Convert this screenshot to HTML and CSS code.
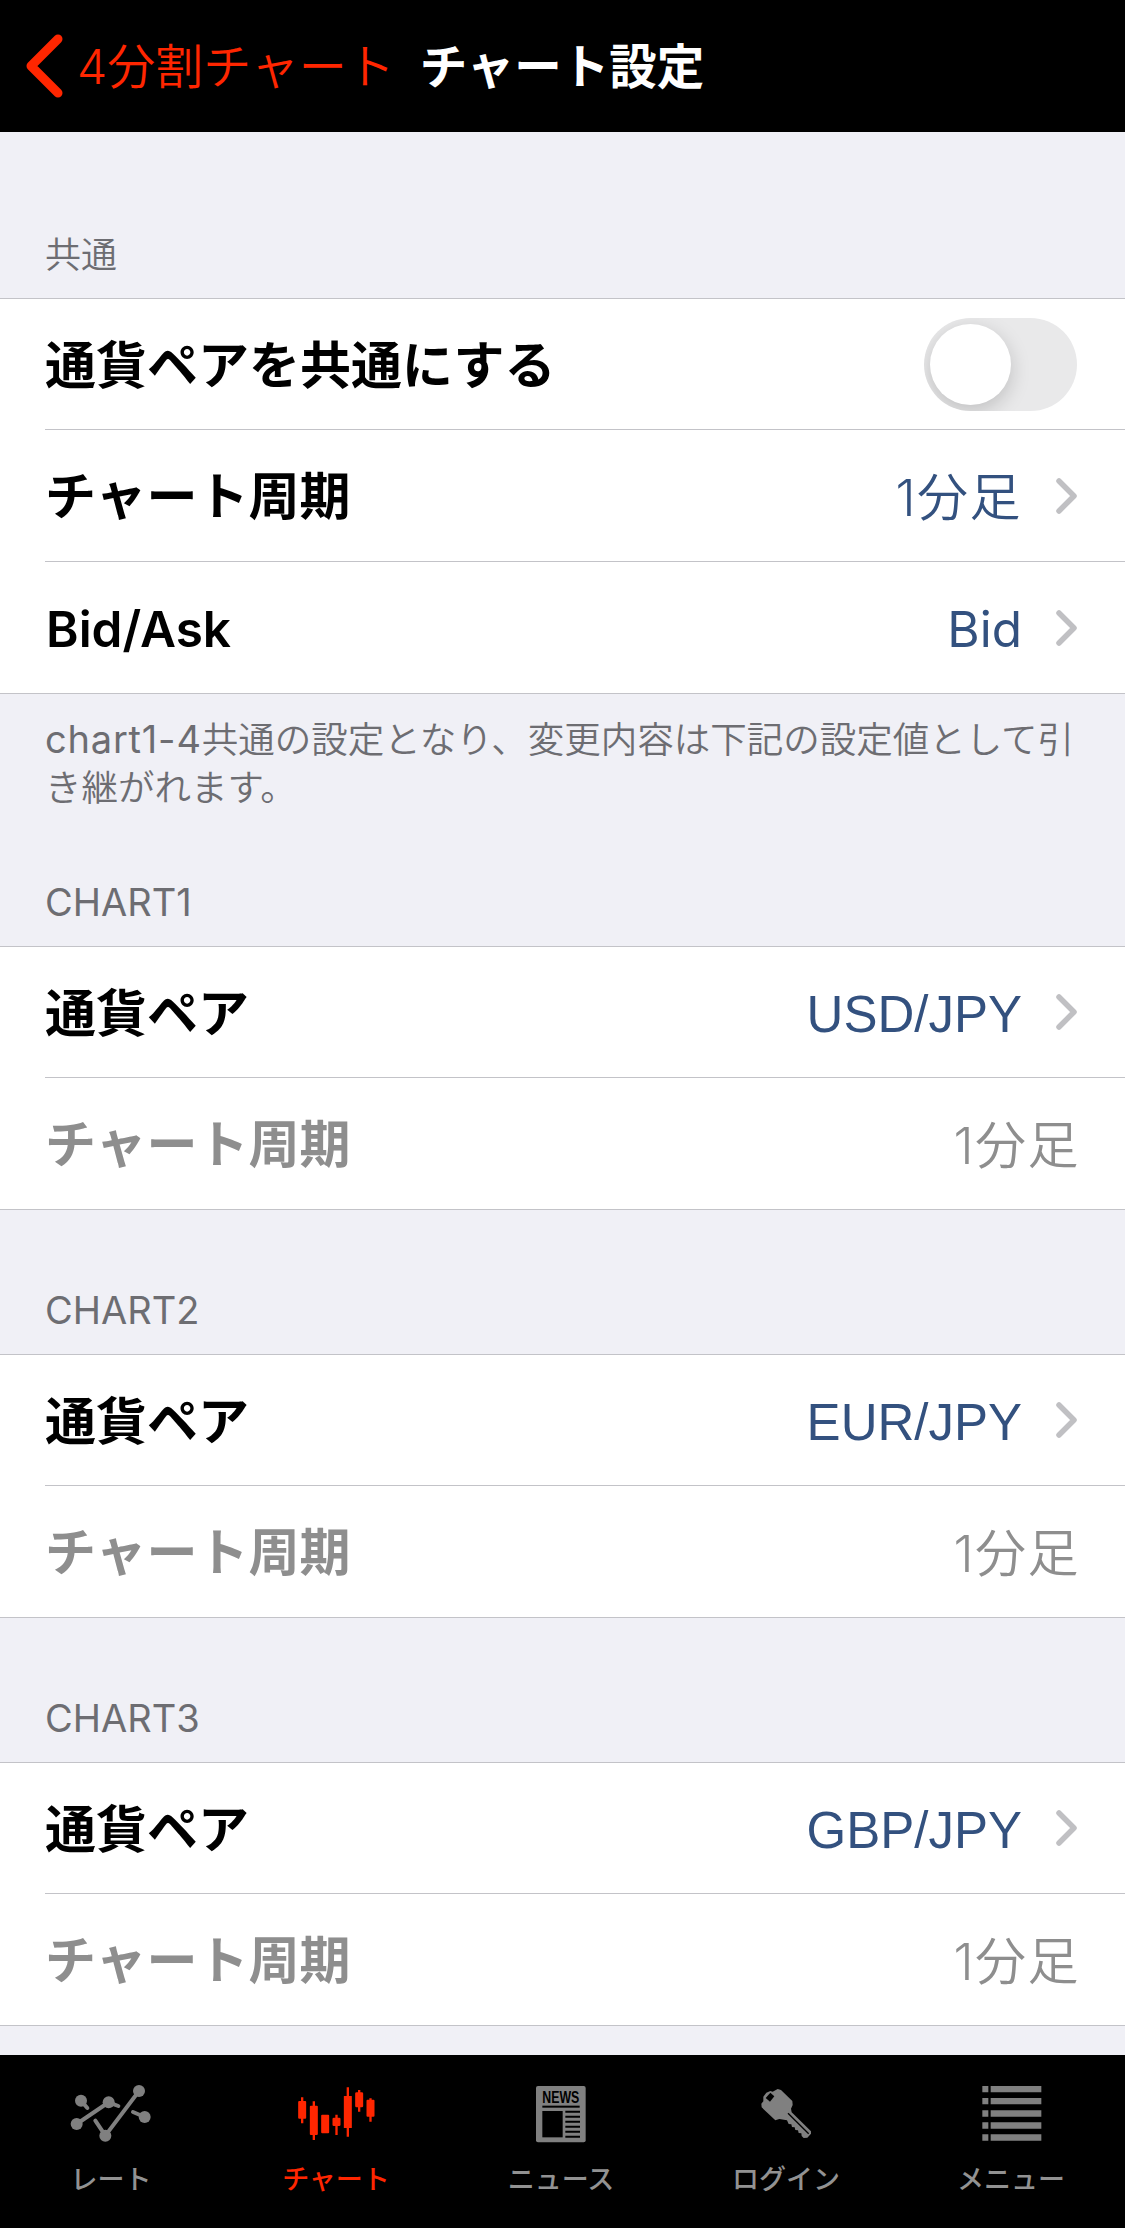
FILE: index.html
```html
<!DOCTYPE html>
<html lang="ja">
<head>
    <meta charset="UTF-8">
    <meta name="viewport" content="width=device-width, initial-scale=1.0">
    <title>チャート設定</title>
    <link rel="stylesheet" href="styles.css">
</head>
<body>
    <header class="navbar">
        <a class="back">
            <svg class="back-icon" viewBox="0 0 38 64"><path d="M33 5 L6 32 L33 59"/></svg>
            <span class="back-text">4分割チャート</span>
        </a>
        <h1 class="title">チャート設定</h1>
    </header>

    <main class="settings">
        <h2 class="section-title first">共通</h2>
        <div class="group">
            <div class="row">
                <span class="label">通貨ペアを共通にする</span>
                <span class="switch"><span class="knob"></span></span>
            </div>
            <div class="row">
                <span class="label">チャート周期</span>
                <span class="value">1分足</span>
                <svg class="chevron" viewBox="0 0 21 36"><path d="M3 3 L18 18 L3 33"/></svg>
            </div>
            <div class="row">
                <span class="label latin">Bid/Ask</span>
                <span class="value latin">Bid</span>
                <svg class="chevron" viewBox="0 0 21 36"><path d="M3 3 L18 18 L3 33"/></svg>
            </div>
        </div>
        <p class="note"><span class="note-latin">chart1-4</span>共通の設定となり、変更内容は下記の設定値として引<br>き継がれます。</p>

        <h2 class="section-title after-note">CHART1</h2>
        <div class="group">
            <div class="row">
                <span class="label">通貨ペア</span>
                <span class="value pair">USD/JPY</span>
                <svg class="chevron" viewBox="0 0 21 36"><path d="M3 3 L18 18 L3 33"/></svg>
            </div>
            <div class="row disabled">
                <span class="label">チャート周期</span>
                <span class="value">1分足</span>
            </div>
        </div>

        <h2 class="section-title">CHART2</h2>
        <div class="group">
            <div class="row">
                <span class="label">通貨ペア</span>
                <span class="value pair">EUR/JPY</span>
                <svg class="chevron" viewBox="0 0 21 36"><path d="M3 3 L18 18 L3 33"/></svg>
            </div>
            <div class="row disabled">
                <span class="label">チャート周期</span>
                <span class="value">1分足</span>
            </div>
        </div>

        <h2 class="section-title">CHART3</h2>
        <div class="group">
            <div class="row">
                <span class="label">通貨ペア</span>
                <span class="value pair">GBP/JPY</span>
                <svg class="chevron" viewBox="0 0 21 36"><path d="M3 3 L18 18 L3 33"/></svg>
            </div>
            <div class="row disabled">
                <span class="label">チャート周期</span>
                <span class="value">1分足</span>
            </div>
        </div>
    </main>

    <nav class="tabbar">
        <a class="tab">
            <svg class="tab-icon" viewBox="0 0 252 189">
                <path class="line" d="M20 126 L116 61 L145 72 M33 56 L52 78 M76 116 L106 161 L207 27 M189 90 L224 105"/>
                <circle cx="33" cy="56" r="18"/>
                <circle cx="20" cy="126" r="18"/>
                <circle cx="116" cy="61" r="18"/>
                <circle cx="106" cy="161" r="18"/>
                <circle cx="207" cy="27" r="18"/>
                <circle cx="224" cy="105" r="18"/>
            </svg>
            <span>レート</span>
        </a>
        <a class="tab active">
            <svg class="tab-icon" viewBox="0 0 252 189">
                <path class="wick" d="M21.5 46 V124 M56.5 58 V174 M124.5 98 V159 M158.5 16 V164 M192.5 24 V89 M226.5 49 V119"/>
                <rect x="9.5" y="57" width="24" height="53" rx="3"/>
                <rect x="44.5" y="71" width="24" height="88" rx="3"/>
                <rect x="78.5" y="98" width="24" height="56" rx="3"/>
                <rect x="112.5" y="107" width="24" height="25" rx="4"/>
                <rect x="146.5" y="42" width="24" height="96" rx="1"/>
                <rect x="180.5" y="31" width="24" height="45" rx="4"/>
                <rect x="214.5" y="53" width="24" height="51" rx="3"/>
            </svg>
            <span>チャート</span>
        </a>
        <a class="tab">
            <svg class="tab-icon" viewBox="0 0 252 189">
                <rect x="48" y="12" width="149" height="169" rx="6"/>
                <text class="news" x="67" y="62" textLength="111" lengthAdjust="spacingAndGlyphs">NEWS</text>
                <rect class="ink" x="67" y="71" width="112" height="6"/>
                <rect class="ink" x="67" y="87" width="61" height="79"/>
                <path class="lines" d="M136 89 H180 M136 104 H180 M136 119 H180 M136 134 H180 M136 149 H180 M136 164 H180"/>
            </svg>
            <span>ニュース</span>
        </a>
        <a class="tab">
            <svg class="tab-icon" viewBox="0 0 252 189">
                <path d="M98 21 L108 24 L142 57 L143 69 L138 80 L140 91 L198 148 L198 155 L187 167 L176 168 L170 162 L169 154 L161 153 L159 145 L151 144 L149 136 L141 135 L139 127 L131 126 L126 115 L103 111 L91 115 L50 76 L49 65 L55 58 L55 44 L64 32 L76 27 L83 29 Z"/>
                <path class="ink" d="M76 32 L88 43 L75 59 L62 48 Z"/>
                <path class="groove" d="M129 94 L191 155"/>
            </svg>
            <span>ログイン</span>
        </a>
        <a class="tab">
            <svg class="tab-icon" viewBox="0 0 252 189">
                <path d="M37 12h18v19h-18z M62 12h152v19h-152z"/>
                <path d="M37 48h18v19h-18z M62 48h152v19h-152z"/>
                <path d="M37 85h18v19h-18z M62 85h152v19h-152z"/>
                <path d="M37 121h18v19h-18z M62 121h152v19h-152z"/>
                <path d="M37 157h18v19h-18z M62 157h152v19h-152z"/>
            </svg>
            <span>メニュー</span>
        </a>
    </nav>
</body>
</html>
```
FILE: styles.css
```css
* {
    box-sizing: border-box;
}
body {
    margin: 0;
    height: 2228px;
    display: flex;
    flex-direction: column;
    overflow: hidden;
    background: #f0f0f6;
    font-family: Inter, "Noto Sans CJK JP", sans-serif;
}

/* header */
.navbar {
    flex: none;
    height: 132px;
    padding-left: 25px;
    display: flex;
    align-items: center;
    background: #000;
    font-size: 48px;
    white-space: nowrap;
}
.back {
    display: flex;
    align-items: center;
    gap: 14px;
    color: #ff2600;
    font-weight: 350;
}
.back-text {
    padding-bottom: 6px;
}
.back-icon {
    width: 38px;
    height: 64px;
    fill: none;
    stroke: #ff2600;
    stroke-width: 9;
    stroke-linecap: round;
    stroke-linejoin: round;
}
.title {
    margin: 0 0 0 25px;
    padding-bottom: 6px;
    color: #fff;
    font-size: 47.5px;
    font-weight: 600;
}

/* settings list */
.settings {
    flex: 1;
    min-height: 0;
    overflow: hidden;
}
.section-title {
    height: 144px;
    margin: 0;
    padding: 0 45px 20px;
    display: flex;
    align-items: flex-end;
    color: #6d6d72;
    font-size: 38px;
    font-weight: 400;
    line-height: 48px;
}
.section-title.first {
    height: 166px;
    padding-bottom: 19px;
    font-size: 36px;
    font-weight: 350;
}
.section-title.after-note {
    height: 132px;
}
.group {
    background: #fff;
    border-top: 1px solid #c3c3c8;
    border-bottom: 1px solid #c3c3c8;
}
.row {
    height: 132px;
    margin-left: 45px;
    padding-right: 48px;
    display: flex;
    align-items: center;
    border-bottom: 1px solid #c3c3c8;
    font-size: 51px;
    white-space: nowrap;
}
.row:first-child {
    height: 131px;
}
.row:last-child {
    height: 131px;
    border-bottom: none;
}
.label {
    flex: 1;
    padding-bottom: 5px;
    color: #000;
    font-weight: 600;
}
.value {
    padding-bottom: 4px;
    color: #33517f;
    font-weight: 350;
    letter-spacing: 1.5px;
}
.latin {
    padding: 3px 0 0 1px;
    font-size: 49.5px;
    letter-spacing: 0;
}
.value.latin {
    font-weight: 400;
}
.pair {
    padding: 4px 0 0;
    font-family: "Liberation Sans", sans-serif;
    font-weight: 400;
    letter-spacing: 0;
}
.disabled .label,
.disabled .value {
    color: #8e8e8e;
}
.disabled .value {
    margin-right: -3px;
}
.chevron {
    width: 21px;
    height: 36px;
    margin-left: 34px;
    fill: none;
    stroke: #c0c0c3;
    stroke-width: 5.5;
    stroke-linecap: round;
    stroke-linejoin: round;
}
.switch {
    width: 153px;
    height: 93px;
    padding: 6px;
    border-radius: 47px;
    background: #e9e9ea;
    overflow: hidden;
}
.knob {
    display: block;
    width: 81px;
    height: 81px;
    border-radius: 50%;
    background: #fff;
    box-shadow: 0 6px 20px rgba(0,0,0,0.18);
}
.note {
    height: 120px;
    margin: 0;
    padding: 21px 0 0 45px;
    color: #6d6d72;
    font-size: 36.5px;
    font-weight: 350;
    line-height: 48px;
    white-space: nowrap;
}
.note-latin {
    font-size: 38px;
    font-weight: 400;
    letter-spacing: 0.8px;
}

/* bottom tabs */
.tabbar {
    flex: none;
    height: 173px;
    display: flex;
    background: #000;
}
.tab {
    flex: 1;
    padding: 27px 2px 0 0;
    display: flex;
    flex-direction: column;
    align-items: center;
    color: #929292;
    font-size: 27px;
    font-weight: 500;
    line-height: 40px;
}
.tab span {
    margin-top: 15px;
    padding-right: 1px;
}
.tab-icon {
    width: 84px;
    height: 63px;
    fill: #808080;
}
.tab.active {
    color: #ff2600;
}
.active .tab-icon {
    fill: #ff2600;
}
.line {
    fill: none;
    stroke: #808080;
    stroke-width: 12;
    stroke-linecap: round;
}
.wick {
    stroke: #ff2600;
    stroke-width: 7;
}
.ink {
    fill: #000;
}
.lines {
    stroke: #000;
    stroke-width: 6;
}
.groove {
    stroke: #000;
    stroke-width: 4;
}
.news {
    fill: #000;
    font-family: "Liberation Sans", sans-serif;
    font-size: 48px;
    font-weight: bold;
}
```
